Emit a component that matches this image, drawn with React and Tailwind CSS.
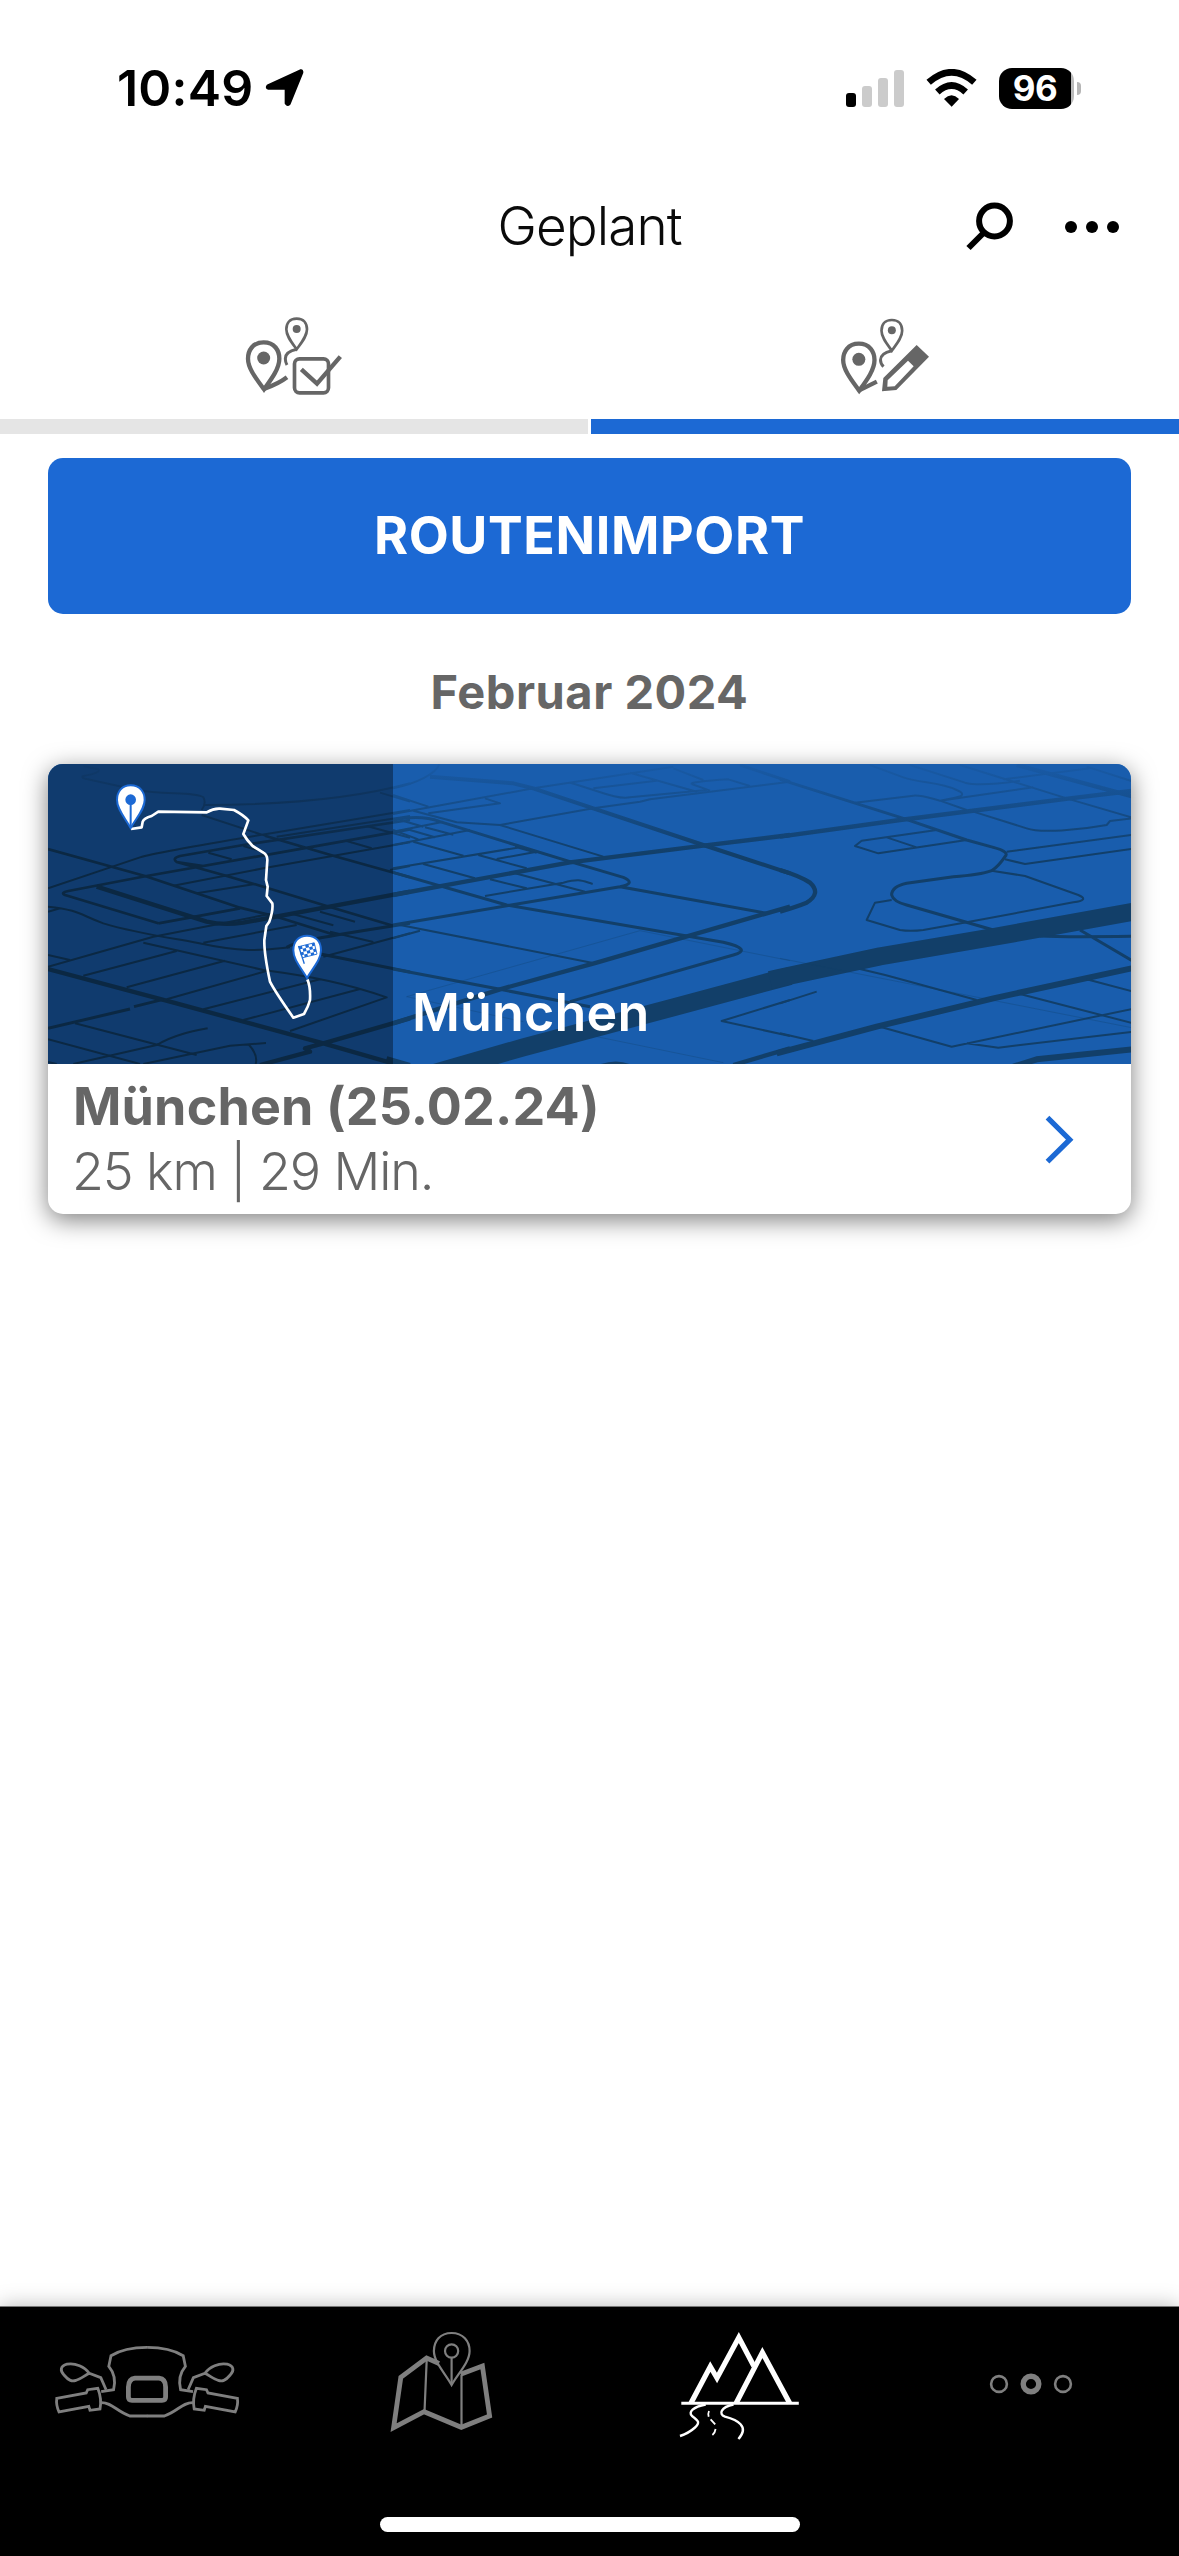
const ROUTE = {
  city: 'München',
  title: 'München (25.02.24)',
  info: '25 km | 29 Min.',
}

function StatusBar() {
  return (
    <div className="flex h-[176px] items-center justify-between pl-[117px] pr-[98px]">
      <div className="flex items-center gap-[12px]">
        <span className="text-[50px] font-semibold leading-none tracking-[0.2px]">10:49</span>
        <svg width="40" height="40" viewBox="0 0 120 120">
          <path d="M8 52 L106 7 Q113 5 112 14 L74 108 Q69 115 62 106 V65 Q62 62 58 62 H10 Q2 60 8 52Z" fill="#000" stroke="#000" strokeWidth="6" strokeLinejoin="round" />
        </svg>
      </div>
      <div className="flex items-center">
        <div className="flex h-[37px] items-end gap-[6px]">
          <span className="h-[14px] w-[10px] rounded-[3px] bg-black" />
          <span className="h-[21px] w-[10px] rounded-[3px] bg-[#cbcbcb]" />
          <span className="h-[29px] w-[10px] rounded-[3px] bg-[#cbcbcb]" />
          <span className="h-[37px] w-[10px] rounded-[3px] bg-[#cbcbcb]" />
        </div>
        <svg className="ml-[22px]" width="51" height="38" viewBox="318 85 153 114">
          <path d="M326 125 Q395 65 463 125" fill="none" stroke="#000" strokeWidth="20" />
          <path d="M352 154 Q395 115 437 154" fill="none" stroke="#000" strokeWidth="20" />
          <path d="M372 175 Q395 153 417 175 L395 198Z" />
        </svg>
        <div className="ml-[22px] flex items-center gap-[3px]">
          <div className="flex h-[41px] w-[75px] items-center justify-center rounded-[13px] bg-[linear-gradient(to_right,#000_72px,#bbb_72px)]">
            <span className="mr-[3px] text-[35px] font-bold leading-none tracking-[-0.5px] text-white">96</span>
          </div>
          <span className="h-[13px] w-[4px] rounded-r-full bg-[#b5b5b5]" />
        </div>
      </div>
    </div>
  )
}

function TitleBar() {
  return (
    <div className="grid h-[102px] grid-cols-[1fr_auto_1fr] items-center pr-[60px] pl-[60px]">
      <span />
      <h1 className="pb-[2px] text-[53px] font-light leading-none tracking-[-0.9px] text-[#0a0a0a]">Geplant</h1>
      <div className="flex items-center justify-end gap-[51px]">
        <svg width="48" height="50" viewBox="0 0 48 50" fill="none" stroke="#000" strokeWidth="6">
          <circle cx="28.5" cy="19" r="15.4" />
          <path d="M18 30.5 L2.5 46" />
        </svg>
        <div className="flex gap-[9px]">
          <span className="size-[12px] rounded-full bg-black" />
          <span className="size-[12px] rounded-full bg-black" />
          <span className="size-[12px] rounded-full bg-black" />
        </div>
      </div>
    </div>
  )
}

function RoutePins() {
  return (
    <>
      <path d="M131 127 C98 127 84 152 84 176 C84 205 108 235 132 268 C156 235 178 205 178 176 C178 152 164 127 131 127Z" strokeWidth="13" />
      <circle cx="131" cy="174" r="19.5" fill="#666" stroke="none" />
      <path d="M230 56 C208 56 199 70 199 88 C199 108 214 126 230 148 C246 126 261 108 261 88 C261 70 252 56 230 56Z" strokeWidth="8" />
      <circle cx="230" cy="87" r="12" fill="#666" stroke="none" />
    </>
  )
}

function DoneIcon() {
  return (
    <svg width="100" height="80" viewBox="72 48 300 240" fill="none" stroke="#666">
      <RoutePins />
      <path d="M230 148 C212 152 196 158 196 176 Q196 186 201 195" strokeWidth="9" />
      <path d="M132 267 C160 257 180 248 201 232" strokeWidth="13" />
      <rect x="223.500" y="176.500" width="102" height="102" rx="15" strokeWidth="11" />
      <path d="M244 208 L291 251 L361 170" strokeWidth="13" />
    </svg>
  )
}

function PlannedIcon() {
  return (
    <svg width="90" height="80" viewBox="180 48 270 240" fill="none" stroke="#666">
      <g transform="translate(105.500 4)">
        <RoutePins />
        <path d="M230 148 C212 152 196 158 196 176 Q196 187 205 196" strokeWidth="9" />
        <path d="M132 267 L185 241" strokeWidth="13" />
      </g>
      <path d="M410 135 L447 170 L349 270 L306 274 L310 234Z M384 182 L323 241 L322 260 L344 259 L401 199Z" fill="#666" fillRule="evenodd" stroke="none" />
    </svg>
  )
}

function Tabs() {
  return (
    <div className="grid grid-cols-2 gap-[3px]">
      <button className="flex h-[156px] flex-col items-center justify-between border-b-[15px] border-[#e5e5e5] pt-[38px]">
        <DoneIcon />
      </button>
      <button className="flex h-[156px] flex-col items-center justify-between border-b-[15px] border-[#1c69d4] pt-[38px]">
        <PlannedIcon />
      </button>
    </div>
  )
}

// Street net of the card, split in three tiles from west to east
function Streets() {
  return (
    <g fill="none" stroke="#123f69" strokeLinejoin="round">
      <g transform="translate(-54 -72)">
        <path strokeWidth="6" d="M160 78 L205 88 Q215 98 160 108 Q150 112 170 117 L320 150 C400 165 500 155 520 172 Q530 190 515 210 M520 195 C700 195 950 182 1140 130 M515 225 L705 287 M54 445 L330 352 C400 330 700 285 1140 210 M740 290 L1140 228 M1010 258 L1140 293 M950 303 L1025 325 M1050 158 L1140 185 M430 437 L700 385 L1140 307 M500 460 L670 433 M535 338 L605 358 M640 318 L700 335" />
        <path strokeWidth="8" d="M54 327 L345 408 L630 503 L740 530 L915 585 M520 378 L440 366 Q425 355 450 348 L640 315 L1140 240 M705 287 L920 350 L1140 412 M440 366 L580 405 L700 440 L880 495 L1089 557 M385 550 L105 465 Q90 458 115 453 L350 408 L820 325 L1140 268 M385 550 L630 505" />
        <path strokeWidth="13" d="M200 440 L530 545 Q580 557 640 548 L1140 455 M54 687 L420 785 L880 910 L1140 985 M690 975 L840 935 L825 925 L880 910 L1140 835" />
        <path strokeWidth="6" d="M54 500 C150 510 150 525 220 550 C320 580 400 590 500 608 C650 640 700 630 780 622 M54 515 L90 505 M520 608 L800 555 M54 680 L370 590 L730 520 M340 608 L700 690 C850 710 950 730 1070 772 L780 873 M160 707 L440 633 M290 742 L585 662 M410 778 L720 690 M520 808 L870 718 M640 840 L990 747 M54 645 L120 660 M135 850 L500 945 M54 898 L330 972 M130 972 L380 915 C430 885 480 875 533 865 M340 972 L600 917 L708 909 M655 912 Q685 945 677 972 M780 520 L910 556 M870 515 L975 545 M900 575 L1030 606 M880 650 L1140 580 M54 966 L80 972 M1080 390 L1140 378" />
        <path strokeWidth="9" d="M770 622 C800 605 850 595 1140 550 M860 640 L1140 696 M54 865 L300 807 M312 800 L400 778" />
      </g>
      <g transform="translate(1026 -72)">
        <path strokeWidth="12" d="M120 110 L370 130 L430 145 L610 205 L940 315 L1200 400" />
        <path strokeWidth="6" d="M9 145 C80 130 140 100 148 72 M9 222 L430 145 L850 80 M9 165 L115 200 M70 212 L200 247 L330 255 L610 205 L750 185 L780 178 L1200 125 M115 220 L330 190 L285 175 M330 255 L640 350 M9 315 L240 270 M9 275 L160 245 M9 270 L85 298 M30 240 L100 260 M60 270 L135 292 M105 262 L190 284 M70 305 L220 347 M9 385 L400 320 M265 345 L410 385 M320 357 L440 335 M375 320 L440 338 M100 372 L255 415 M285 468 L520 428 C570 415 575 422 608 432 M300 418 L410 445 M375 400 L585 455 M30 555 L605 668 M9 595 L90 572 M1200 780 L995 843 L1200 888 M540 128 C620 150 680 180 720 172 L950 150 M610 145 L800 122 M720 98 L920 155 M850 85 L940 120 M905 132 Q900 125 1015 118 L1080 138 M905 132 L960 152" />
        <path strokeWidth="9" d="M9 240 C60 230 110 230 150 245 L540 365 L700 412 Q740 430 690 440 L9 555 M9 397 L350 495 L1000 607 Q1090 628 1030 645 L540 785 M690 440 L1130 520 M9 687 L330 748 L600 800 M1050 75 L1200 125" />
        <path strokeWidth="13" d="M9 465 L160 437 L540 367 L940 317 L1200 285 M9 850 L330 748 L620 668 L1130 520 L1200 500 M1030 975 L1200 925 M-10 955 L60 975" />
        <path strokeWidth="54" d="M60 1020 L400 922 L850 802 L1200 708" />
        <path strokeWidth="1.500" strokeOpacity="0.6" d="M400 845 L50 770 L750 572 L1200 662 M620 890 L1000 968" />
        <path strokeWidth="8" d="M630 977 Q680 960 720 977" />
      </g>
      <g transform="translate(2196 -72)">
        <path strokeWidth="9" d="M0 118 L370 235 L560 300 L640 322 Q690 335 675 350 Q655 380 635 392 Q600 405 520 410 L380 430 Q335 440 335 465 Q340 485 380 495 L640 570 M780 588 Q850 592 1060 589 M900 570 L1060 664" />
        <path strokeWidth="13" d="M0 290 L360 240 L870 175 L1060 152 M0 390 Q60 408 90 428 Q125 460 80 488 Q50 500 0 515 M710 75 L1060 170" />
        <path strokeWidth="54" d="M-30 720 L0 713 L300 649 L640 591 L1060 515" />
        <path strokeWidth="18" d="M-10 940 L290 860 L640 775 L1060 684 M700 980 L770 958 L1060 928" />
        <path strokeWidth="6" d="M270 75 L370 112 C420 130 480 125 530 150 Q565 165 525 173 L480 182 L560 210 M225 188 L400 167 C430 165 450 175 480 182 M480 182 L760 142 M390 75 L555 128 Q600 140 720 122 M540 75 L870 178 L1060 234 M670 118 L930 85 M920 80 L1060 125 M580 215 L740 265 C780 280 900 270 980 255 L990 243 L1060 235 M470 270 L245 302 L225 318 L295 340 L560 300 M320 292 L410 322 M680 335 L1060 284 M675 358 L735 372 L1060 326 M635 392 L735 408 L895 465 Q930 480 880 487 L560 547 L430 570 Q390 575 360 570 L260 540 L285 488 L335 480 M240 687 Q320 705 390 725 L590 780 M0 790 L110 755 M0 880 L100 903 M300 860 L515 920 L1060 806 M560 910 L655 923 L1060 875 M720 762 L1060 850 M920 718 L1060 755" />
        <path strokeWidth="1.500" strokeOpacity="0.6" d="M0 655 L1060 864" />
      </g>
    </g>
  )
}

function RouteMap() {
  return (
    <svg className="block" width="1083" height="300" viewBox="0 0 3249 900">
      <defs>
        <linearGradient id="haze" x1="0" y1="0" x2="0" y2="1">
          <stop offset="0" stopColor="#195dad" stopOpacity="0.92" />
          <stop offset="1" stopColor="#195dad" stopOpacity="0" />
        </linearGradient>
      </defs>
      <rect width="3249" height="900" fill="#195dad" />
      <Streets />
      <rect width="3249" height="270" fill="url(#haze)" />
      <rect width="1035" height="900" fill="#000" fillOpacity="0.36" />
      <g transform="translate(-54 -72)">
        <path fill="none" stroke="#fff" strokeWidth="8" strokeLinejoin="round" d="M303 267 L335 262 L338 245 Q342 235 365 228 L385 215 L530 217 Q550 205 570 206 L612 210 Q640 225 655 241 L640 282 Q650 300 668 318 L700 338 Q712 345 712 360 L708 420 L713 440 L710 468 L727 490 Q730 510 718 545 L709 558 L703 600 Q702 640 720 725 Q735 755 790 833 L822 822 Q835 800 840 780 Q842 740 832 718" />
        <g stroke="#1c69d4" strokeWidth="6">
          <path fill="#fff" d="M302 136 C275 136 261 155 261 180 C261 208 284 232 302 264 C320 232 344 208 344 180 C344 155 330 136 302 136Z" />
          <circle cx="302" cy="179" r="13" fill="#1c69d4" />
          <path d="M302 185 V262" />
          <path fill="#fff" d="M831 587 C804 587 790 606 790 631 C790 659 813 683 831 714 C849 683 873 659 873 631 C873 606 859 587 831 587Z" />
        </g>
        <g transform="translate(806 620) rotate(-14)" fill="#1c69d4">
          <path d="M0 0 H10 V9 H0Z M20 0 H30 V9 H20Z M40 0 H48 V9 H40Z M10 9 H20 V18 H10Z M30 9 H40 V18 H30Z M0 18 H10 V27 H0Z M20 18 H30 V27 H20Z M40 18 H48 V27 H40Z M10 27 H20 V35 H10Z M30 27 H40 V35 H30Z" />
          <path d="M0 0 H48 V35 H3" fill="none" stroke="#1c69d4" strokeWidth="2.500" />
          <path d="M0 -2 L4 54" stroke="#1c69d4" strokeWidth="4" />
        </g>
      </g>
    </svg>
  )
}

function RouteCard({ route }) {
  return (
    <div className="overflow-hidden rounded-[15px] bg-white shadow-[0_6px_24px_rgba(0,0,0,0.5)]">
      <div className="relative">
        <RouteMap />
        <span className="absolute bottom-[19px] left-[364px] text-[52px] font-semibold leading-[64px] tracking-[0.15px] text-white">{route.city}</span>
      </div>
      <div className="flex h-[150px] items-center justify-between pl-[25px] pr-[57px] text-[#666]">
        <div>
          <p className="text-[52px] font-bold leading-[65px] tracking-[0.15px]">{route.title}</p>
          <p className="-ml-px text-[52px] font-light leading-[65px] tracking-[-1.1px]">{route.info}</p>
        </div>
        <svg width="30" height="50" viewBox="0 0 30 50" fill="none" stroke="#1c69d4" strokeWidth="5.300">
          <path d="M3.500 3.700 L25.700 25.700 L3.500 47.700" />
        </svg>
      </div>
    </div>
  )
}

function HandlebarHalf() {
  return (
    <>
      <path d="M97.100 7.300 C82 7.300 70 10 61 15.700 L58.800 26.300 Q67 36 63.600 49.700 L51.200 51.700" />
      <path d="M39.200 33.300 C35 27 25 22.500 17 24.200 C10 26 10 31 14 35 C19 41 22 41.500 26 40.300 C30 39.500 34 36 39.200 33.300 L50.800 37.700 L56.100 49.700" />
      <path d="M6.800 58.300 L36.200 53 L37.700 49.700 L47.800 48.300 Q52 59 50 69 L40 70.300 L38.800 66.300 L9 72 Q5.800 65 6.800 58.300Z" />
      <path d="M51.200 62.700 C62 62.500 66 71 79.800 76 H97.300" />
    </>
  )
}

function RideIcon() {
  return (
    <svg width="194" height="84" viewBox="0 0 194 84" fill="none" stroke="#7f7f7f" strokeWidth="2.800">
      <HandlebarHalf />
      <g transform="matrix(-1 0 0 1 194.200 0)">
        <HandlebarHalf />
      </g>
      <path d="M85 38.200 H109 Q115.600 39 115.600 47 V57 Q115.600 60.300 112 60.300 H82 Q78.400 60.300 78.400 57 V47 Q78.600 39 85 38.200Z" strokeWidth="4.800" />
    </svg>
  )
}

function MapIcon() {
  return (
    <svg width="112" height="108" viewBox="0 0 112 108" fill="none" stroke="#7f7f7f" strokeWidth="2.200">
      <path d="M54 35.500 L41.600 30 L15.800 49.300 L8.600 99.700 L39.100 83.700 L76.300 99.300 L104.600 88 L97.400 38 L75.600 46.300" strokeWidth="4.800" />
      <path d="M41.700 32 L39.500 83.700 M76.500 47 V99" />
      <path d="M66.600 5 C55 5 48.900 13 48.900 23 C48.900 34 60 45 66.600 57 C73.500 45 84.600 34 84.600 23 C84.600 13 78 5 66.600 5Z" />
      <circle cx="66.600" cy="23" r="6.600" />
      <path d="M66.600 30 V55" />
    </svg>
  )
}

function RoutesIcon() {
  return (
    <svg width="126" height="112" viewBox="0 0 126 112" fill="none" stroke="#fff" strokeWidth="5.200">
      <path d="M16 75 L35.300 38.500 L42 50 L63.800 9.500 L78.800 38" strokeMiterlimit="10" />
      <path d="M61.200 75 L87.400 24.500 L114.600 75" />
      <path d="M6.300 75.300 H123.800" strokeWidth="3" />
      <path d="M30.700 76.500 C18 79 13 84 17 88 C24 93 25 95 20 99.500 Q14 105 5 108" strokeWidth="2.400" />
      <path d="M58.500 76.500 C46 79 43 86 50 88.700 C62 92 75 98 63.400 111" strokeWidth="2.400" />
      <path d="M34 83 Q32.700 86 33.700 88.700 M35.600 91.300 L40.200 96.300 M40.600 101 Q40 105 37.400 107" strokeWidth="1.800" />
    </svg>
  )
}

function MoreIcon() {
  return (
    <svg width="84" height="24" viewBox="0 0 84 24" fill="none" stroke="#7f7f7f">
      <circle cx="10" cy="12" r="7.900" strokeWidth="2.600" />
      <circle cx="42" cy="12" r="7.800" strokeWidth="5.400" />
      <circle cx="74" cy="12" r="7.900" strokeWidth="2.600" />
    </svg>
  )
}

function BottomNav() {
  return (
    <nav className="flex h-[250px] flex-col items-center justify-between border-t border-[#777] bg-black pb-[24px] shadow-[0_0_20px_rgba(0,0,0,0.28)]">
      <div className="grid w-full grid-cols-4">
        <button className="flex h-[153px] items-center justify-center pr-px pb-[3px]"><RideIcon /></button>
        <button className="flex h-[153px] items-center justify-center pr-[2px] pb-[3px]"><MapIcon /></button>
        <button className="flex h-[153px] items-center justify-center pl-[2px]"><RoutesIcon /></button>
        <button className="flex h-[153px] items-center justify-center pr-[2px]"><MoreIcon /></button>
      </div>
      <span className="h-[15px] w-[420px] rounded-full bg-white" />
    </nav>
  )
}

export default function App() {
  return (
    <div className="flex h-[2556px] w-[1179px] flex-col overflow-hidden bg-white font-['Inter',sans-serif] text-black">
      <StatusBar />
      <TitleBar />
      <Tabs />
      <main className="flex flex-1 flex-col px-[48px] pt-[24px]">
        <button className="h-[156px] rounded-[15px] bg-[#1c69d4] text-[52px] font-bold leading-none tracking-[0.6px] text-white">ROUTENIMPORT</button>
        <h2 className="flex h-[150px] items-center justify-center pt-[5px] text-[47px] font-bold leading-none tracking-[0.5px] text-[#666]">Februar 2024</h2>
        <RouteCard route={ROUTE} />
      </main>
      <BottomNav />
    </div>
  )
}
